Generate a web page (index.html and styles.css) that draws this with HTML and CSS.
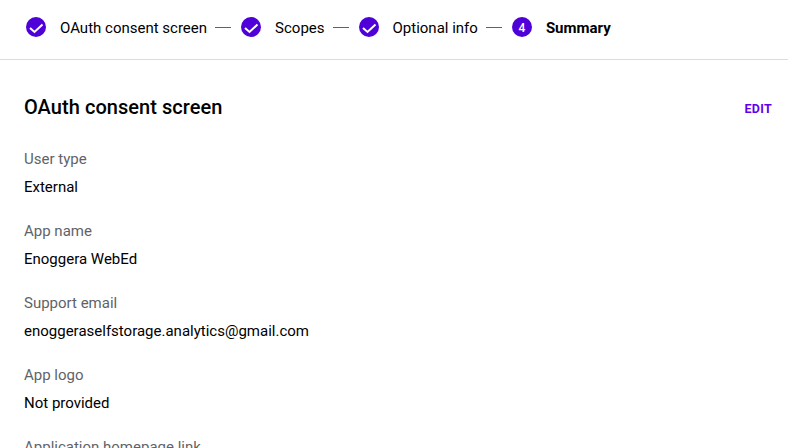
FILE: index.html
```html
<!DOCTYPE html>
<html lang="en">
<head>
<meta charset="utf-8">
<title>OAuth consent screen</title>
<link rel="stylesheet" href="styles.css">
</head>
<body>
<nav class="stepper">
  <div class="step">
    <svg class="check" viewBox="0 0 24 24" width="24" height="24"><circle cx="12" cy="12" r="10"/><path class="tick" d="M6 13l4.5 4L18.5 9.5"/></svg>
    <span class="step-label">OAuth consent screen</span>
  </div>
  <div class="sep"></div>
  <div class="step">
    <svg class="check" viewBox="0 0 24 24" width="24" height="24"><circle cx="12" cy="12" r="10"/><path class="tick" d="M6 13l4.5 4L18.5 9.5"/></svg>
    <span class="step-label">Scopes</span>
  </div>
  <div class="sep"></div>
  <div class="step">
    <svg class="check" viewBox="0 0 24 24" width="24" height="24"><circle cx="12" cy="12" r="10"/><path class="tick" d="M6 13l4.5 4L18.5 9.5"/></svg>
    <span class="step-label">Optional info</span>
  </div>
  <div class="sep"></div>
  <div class="step">
    <span class="num">4</span>
    <span class="step-label current">Summary</span>
  </div>
</nav>
<main class="content">
  <header class="head">
    <h2 class="title">OAuth consent screen</h2>
    <a class="edit">EDIT</a>
  </header>
  <div class="field"><div class="label">User type</div><div class="value">External</div></div>
  <div class="field"><div class="label">App name</div><div class="value">Enoggera WebEd</div></div>
  <div class="field"><div class="label">Support email</div><div class="value">enoggeraselfstorage.analytics@gmail.com</div></div>
  <div class="field"><div class="label">App logo</div><div class="value">Not provided</div></div>
  <div class="field"><div class="label">Application homepage link</div></div>
</main>
</body>
</html>
```

FILE: styles.css
```css
* { box-sizing: border-box; }
html, body { margin: 0; height: 100%; overflow: hidden; background: #fff; }
body { font-family: Roboto, sans-serif; color: #000; }
.stepper { height: 60px; display: flex; align-items: center; padding: 0 24px 5px; border-bottom: 1px solid #dadce0; }
.step { display: flex; align-items: center; }
.check { fill: #4f00d8; display: block; }
.tick { fill: none; stroke: #fff; stroke-width: 2; }
.num { width: 20px; height: 20px; margin: 0 2px; padding-top: 2px; border-radius: 50%; background: #4f00d8; color: #fff; font-size: 12px; font-weight: 500; display: flex; align-items: center; justify-content: center; }
.step-label { margin-left: 12px; padding-top: 2px; font-size: 15px; }
.step-label.current { font-weight: 700; }
.sep { width: 16px; height: 1px; background: #5f6368; margin: 0 8px; }
.content { padding: 0 16px 0 24px; }
.head { display: flex; justify-content: space-between; align-items: center; margin-top: 31px; height: 32px; }
.title { margin: 0; font-size: 20px; font-weight: 500; letter-spacing: .05px; }
.edit { color: #6200ee; padding-top: 2px; font-size: 12.5px; font-weight: 700; letter-spacing: .3px; }
.field { height: 72px; padding-top: 11px; font-size: 15px; }
.head + .field { margin-top: 15px; }
.label { color: #5f6368; line-height: 20px; }
.value { margin-top: 8px; line-height: 20px; }
```
